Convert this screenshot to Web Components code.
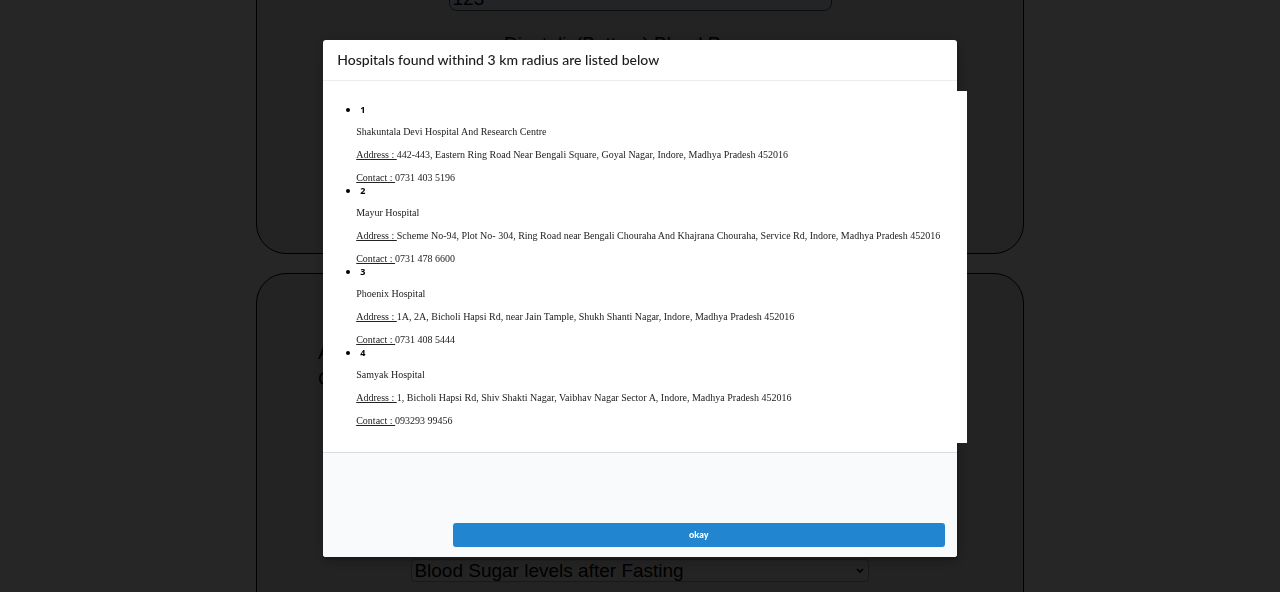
<!DOCTYPE html>
<html lang="en">
<head>
<meta charset="utf-8">
<title>Health check</title>
<style>
html,body{margin:0;height:100%;overflow:hidden;background:#fff}
</style>
</head>
<body>
<health-page></health-page>
<modal-overlay>
<hospital-modal>
<span slot="title">Hospitals found withind 3 km radius are listed below</span>
<hospital-item no="1" name="Shakuntala Devi Hospital And Research Centre" address="442-443, Eastern Ring Road Near Bengali Square, Goyal Nagar, Indore, Madhya Pradesh 452016" contact="0731 403 5196"></hospital-item>
<hospital-item no="2" name="Mayur Hospital" address="Scheme No-94, Plot No- 304, Ring Road near Bengali Chouraha And Khajrana Chouraha, Service Rd, Indore, Madhya Pradesh 452016" contact="0731 478 6600"></hospital-item>
<hospital-item no="3" name="Phoenix Hospital" address="1A, 2A, Bicholi Hapsi Rd, near Jain Tample, Shukh Shanti Nagar, Indore, Madhya Pradesh 452016" contact="0731 408 5444"></hospital-item>
<hospital-item no="4" name="Samyak Hospital" address="1, Bicholi Hapsi Rd, Shiv Shakti Nagar, Vaibhav Nagar Sector A, Indore, Madhya Pradesh 452016" contact="093293 99456"></hospital-item>
</hospital-modal>
</modal-overlay>
<script>
const define = (name, html, setup) => customElements.define(name, class extends HTMLElement {
  constructor() {
    super();
    this.attachShadow({ mode: 'open' }).innerHTML = html;
  }
  connectedCallback() { if (setup) setup(this, this.shadowRoot); }
});

define('form-card', `
<style>
:host{display:block;box-sizing:border-box;border:1px solid #000;border-radius:30px;background:#e6e6e6}
</style><slot></slot>`);

define('health-page', `
<style>
:host{display:block;height:100vh;overflow:hidden;font:19px/26px "Liberation Sans",Arial,sans-serif;color:#000}
main{width:60%;margin:-40px auto 0;display:flex;flex-direction:column;gap:19px}
.pressure{height:294px;text-align:center;padding-top:18px}
.sugar{height:400px;padding:66px 61px 0}
input{display:block;box-sizing:border-box;width:50%;height:32px;margin:0 auto 20px;padding:8px 3px 0;border:1px solid #555;border-radius:8px;background:#e8f0fe;font:inherit;line-height:22px;color:#000}
label{padding-left:8px}
.sugar p{margin:0 0 167px}
select{appearance:none;display:block;box-sizing:border-box;width:71%;height:23px;margin:0 auto;padding:0 2px;border:1px solid #aaa;border-radius:4px;background:#efefef url("data:image/svg+xml,%3Csvg xmlns='http://www.w3.org/2000/svg' width='8' height='6' viewBox='0 0 8 6'%3E%3Cpath d='M1 1l3 3 3-3' fill='none' stroke='%23000' stroke-width='1.6'/%3E%3C/svg%3E") no-repeat right 4px center;font:inherit;line-height:21px;color:#000}
</style>
<main>
<form-card class="pressure">
<input id="top" type="text" value="123" aria-label="Systolic blood pressure">
<label for="top">Diastolic(Bottom) Blood Pressure</label>
</form-card>
<form-card class="sugar">
<p>A<br>C</p>
<select aria-label="Blood sugar test"><option>Blood Sugar levels after Fasting</option></select>
</form-card>
</main>`);

define('modal-overlay', `
<style>
:host{position:fixed;inset:0;display:flex;justify-content:center;align-items:flex-start;padding-top:40px;background:rgba(0,0,0,.85)}
</style><slot></slot>`);

define('hospital-modal', `
<style>
:host{display:block;width:49.5%;border-radius:3px;background:#fff;box-shadow:1px 3px 3px rgba(0,0,0,.2),1px 3px 15px 2px rgba(0,0,0,.2);font-family:Lato,sans-serif}
h2{margin:0;padding:10px 14px;border-bottom:1px solid #eceded;font-size:14px;line-height:20px;font-weight:500;color:#1c1c1c}
.content{padding:10px 10px 9px}
ul{box-sizing:border-box;width:calc(100% + 20px);margin:0;padding:12px 0 16px 23px;list-style:none;background:#fff}
footer{display:flex;justify-content:flex-end;box-sizing:border-box;padding:70px 12px 10px;border-top:1px solid #d9dddf;border-radius:0 0 3px 3px;background:#f9fafb}
button{width:492px;max-width:100%;height:24px;border:0;border-radius:3px;padding:0;background:#2185d0;color:#fff;font:900 9px/12px Lato,sans-serif}
</style>
<h2><slot name="title"></slot></h2>
<div class="content"><ul><slot></slot></ul></div>
<footer><button type="button">okay</button></footer>`,
(host, root) => {
  host.setAttribute('role', 'dialog');
  root.querySelector('button').addEventListener('click', () => host.parentElement.remove());
});

define('hospital-item', `
<style>
:host{display:block;padding-bottom:1px;font:10px/13px "Liberation Serif",serif;color:#222;white-space:nowrap}
h3{display:flex;align-items:center;gap:10px;margin:0 0 9px -10px;font:700 9px/13px "Open Sans",sans-serif;color:#000}
h3::before{content:"";width:4px;height:4px;border-radius:50%;background:#000}
p{margin:0}
p+p{margin-top:10px}
p:last-child{margin-bottom:-1px}
</style>
<h3><span id="no"></span></h3>
<p id="name"></p>
<p><u>Address : </u><span id="address"></span></p>
<p><u>Contact : </u><span id="contact"></span></p>`,
(host, root) => {
  host.setAttribute('role', 'listitem');
  for (const key of ['no', 'name', 'address', 'contact'])
    root.getElementById(key).textContent = host.getAttribute(key);
});
</script>
</body>
</html>
